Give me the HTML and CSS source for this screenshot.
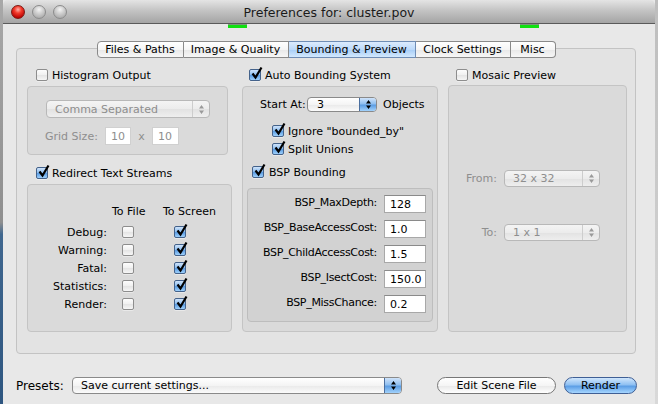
FILE: index.html
```html
<!DOCTYPE html>
<html>
<head>
<meta charset="utf-8">
<title>Preferences for: cluster.pov</title>
<link rel="stylesheet" href="styles.css">
</head>
<body>
<div class="screen">
  <div class="desk-l"></div>
  <div class="window">
    <div class="titlebar">
      <div class="lights"><span class="light red"></span><span class="light grey"></span><span class="light grey"></span></div>
      <div class="title">Preferences for: cluster.pov</div>
    </div>
    <span class="mark m1"></span><span class="mark m2"></span>
    <div class="body">
      <div class="tabbox">
        <div class="tabs">
          <span class="tab t1">Files &amp; Paths</span>
          <span class="tab t2">Image &amp; Quality</span>
          <span class="tab t3 sel">Bounding &amp; Preview</span>
          <span class="tab t4">Clock Settings</span>
          <span class="tab t5">Misc</span>
        </div>
        <div class="cols">
          <div class="col left">
            <div class="chk-row"><span class="cb"></span><span>Histogram Output</span></div>
            <div class="group hist">
              <div class="popup dis wide"><span class="pv">Comma Separated</span><span class="step"><svg width="7" height="11" viewBox="0 0 7 11"><path d="M3.5 1L6 4.5H1Z M1 6.5H6L3.5 10Z" fill="#9a9a9a"/></svg></span></div>
              <div class="grid-row"><span class="glab">Grid Size:</span><span class="field dis w26">10</span><span class="gx">x</span><span class="field dis w27">10</span></div>
            </div>
            <div class="chk-row redirect"><span class="cb on"><svg class="ck" viewBox="0 0 14 14"><path d="M2.5 6.5L5.5 10.5L11.5 0.5" fill="none" stroke="#000" stroke-width="2.2"/></svg></span><span>Redirect Text Streams</span></div>
            <div class="group streams">
              <div class="srow head"><span class="sl"></span><span class="sh1">To File</span><span class="sh2">To Screen</span></div>
              <div class="srow"><span class="sl">Debug:</span><span class="s1"><span class="cb"></span></span><span class="s2"><span class="cb on"><svg class="ck" viewBox="0 0 14 14"><path d="M2.5 6.5L5.5 10.5L11.5 0.5" fill="none" stroke="#000" stroke-width="2.2"/></svg></span></span></div>
              <div class="srow"><span class="sl">Warning:</span><span class="s1"><span class="cb"></span></span><span class="s2"><span class="cb on"><svg class="ck" viewBox="0 0 14 14"><path d="M2.5 6.5L5.5 10.5L11.5 0.5" fill="none" stroke="#000" stroke-width="2.2"/></svg></span></span></div>
              <div class="srow"><span class="sl">Fatal:</span><span class="s1"><span class="cb"></span></span><span class="s2"><span class="cb on"><svg class="ck" viewBox="0 0 14 14"><path d="M2.5 6.5L5.5 10.5L11.5 0.5" fill="none" stroke="#000" stroke-width="2.2"/></svg></span></span></div>
              <div class="srow"><span class="sl">Statistics:</span><span class="s1"><span class="cb"></span></span><span class="s2"><span class="cb on"><svg class="ck" viewBox="0 0 14 14"><path d="M2.5 6.5L5.5 10.5L11.5 0.5" fill="none" stroke="#000" stroke-width="2.2"/></svg></span></span></div>
              <div class="srow"><span class="sl">Render:</span><span class="s1"><span class="cb"></span></span><span class="s2"><span class="cb on"><svg class="ck" viewBox="0 0 14 14"><path d="M2.5 6.5L5.5 10.5L11.5 0.5" fill="none" stroke="#000" stroke-width="2.2"/></svg></span></span></div>
            </div>
          </div>

          <div class="col mid">
            <div class="chk-row"><span class="cb on"><svg class="ck" viewBox="0 0 14 14"><path d="M2.5 6.5L5.5 10.5L11.5 0.5" fill="none" stroke="#000" stroke-width="2.2"/></svg></span><span>Auto Bounding System</span></div>
            <div class="group auto">
              <div class="start-row">
                <span class="slab">Start At:</span>
                <div class="popup blue small"><span class="pv">3</span><span class="step bl"><svg width="7" height="11" viewBox="0 0 7 11"><path d="M3.5 1L6 4.5H1Z M1 6.5H6L3.5 10Z" fill="#000"/></svg></span></div>
                <span class="obj">Objects</span>
              </div>
              <div class="chk-row sub ign"><span class="cb on"><svg class="ck" viewBox="0 0 14 14"><path d="M2.5 6.5L5.5 10.5L11.5 0.5" fill="none" stroke="#000" stroke-width="2.2"/></svg></span><span>Ignore "bounded_by"</span></div>
              <div class="chk-row sub"><span class="cb on"><svg class="ck" viewBox="0 0 14 14"><path d="M2.5 6.5L5.5 10.5L11.5 0.5" fill="none" stroke="#000" stroke-width="2.2"/></svg></span><span>Split Unions</span></div>
              <div class="chk-row bsp"><span class="cb on"><svg class="ck" viewBox="0 0 14 14"><path d="M2.5 6.5L5.5 10.5L11.5 0.5" fill="none" stroke="#000" stroke-width="2.2"/></svg></span><span>BSP Bounding</span></div>
              <div class="group inner">
                <div class="brow"><span class="blab">BSP_MaxDepth:</span><span class="field bf">128</span></div>
                <div class="brow"><span class="blab">BSP_BaseAccessCost:</span><span class="field bf">1.0</span></div>
                <div class="brow"><span class="blab">BSP_ChildAccessCost:</span><span class="field bf">1.5</span></div>
                <div class="brow"><span class="blab">BSP_IsectCost:</span><span class="field bf">150.0</span></div>
                <div class="brow"><span class="blab">BSP_MissChance:</span><span class="field bf">0.2</span></div>
              </div>
            </div>
          </div>

          <div class="col right">
            <div class="chk-row"><span class="cb"></span><span>Mosaic Preview</span></div>
            <div class="group mosaic">
              <div class="mrow from"><span class="mlab">From:</span><div class="popup dis mp"><span class="pv">32 x 32</span><span class="step"><svg width="7" height="11" viewBox="0 0 7 11"><path d="M3.5 1L6 4.5H1Z M1 6.5H6L3.5 10Z" fill="#9a9a9a"/></svg></span></div></div>
              <div class="mrow to"><span class="mlab">To:</span><div class="popup dis mp"><span class="pv">1 x 1</span><span class="step"><svg width="7" height="11" viewBox="0 0 7 11"><path d="M3.5 1L6 4.5H1Z M1 6.5H6L3.5 10Z" fill="#9a9a9a"/></svg></span></div></div>
            </div>
          </div>
        </div>
      </div>

      <div class="footer">
        <span class="plab">Presets:</span>
        <div class="popup blue presets"><span class="pv">Save current settings...</span><span class="step bl"><svg width="7" height="11" viewBox="0 0 7 11"><path d="M3.5 1L6 4.5H1Z M1 6.5H6L3.5 10Z" fill="#000"/></svg></span></div>
        <span class="btn edit">Edit Scene File</span>
        <span class="btn render">Render</span>
      </div>
    </div>
  </div>
  <div class="desk-r"></div>
</div>
</body>
</html>
```

FILE: styles.css
```css
* { box-sizing: border-box; }
html, body { margin: 0; padding: 0; }
body {
  width: 658px; height: 404px; overflow: hidden;
  font-family: "DejaVu Sans", sans-serif; font-size: 11px; color: #000;
  background: #888;
}
.screen { display: flex; height: 404px; }
.desk-l { width: 3px; background: linear-gradient(#a8a8a8, #8f8f8f 55%, #40678f 58%, #2e5680); }
.desk-r { width: 3px; background: linear-gradient(#bdbdbd, #d9d9d9); }
.window { position: relative; width: 652px; background: #e8e8e8; display: flex; flex-direction: column; }

.titlebar {
  height: 24px; border-bottom: 1px solid #5a5a5a;
  background: linear-gradient(#e4e4e4, #c4c4c4 45%, #a4a4a4);
  display: flex; align-items: center; position: relative;
  border-radius: 5px 5px 0 0;
}
.lights { display: flex; gap: 7px; padding-left: 8px; position: relative; z-index: 1; }
.light { width: 14px; height: 14px; border-radius: 50%; display: block; }
.light.red { background: radial-gradient(circle at 50% 30%, #ffb0a8 0, #f23b2c 35%, #b80000 80%); border: 1px solid #7d1a14; }
.light.grey { background: radial-gradient(circle at 50% 30%, #f4f4f4 0, #cfcfcf 40%, #a9a9a9 85%); border: 1px solid #8c8c8c; }
.title { position: absolute; left: 0; right: 0; top: 0; bottom: 0; display: flex; align-items: center; justify-content: center; font-size: 12.5px; color: #1a1a1a; padding-top: 1px; }

.mark { position: absolute; top: 24px; width: 19px; height: 4px; background: #10e010; border-top: 1px solid #7a9a7a; }
.m1 { left: 225px; }
.m2 { left: 517px; }

.body { display: flex; flex-direction: column; padding-left: 13px; }
.tabbox {
  margin-top: 24px; width: 620px; height: 306px;
  border: 1px solid #c3c3c3; border-radius: 4px; background: #e3e3e3;
  display: flex; flex-direction: column;
}
.tabs { display: flex; justify-content: center; margin-top: -8px; height: 17px; }
.tab {
  height: 17px; display: flex; align-items: center; justify-content: center;
  border: 1px solid #8a8a8a; border-left: none;
  background: linear-gradient(#ffffff, #f5f5f5 50%, #e8e8e8 51%, #f7f7f7);
  font-size: 11px; white-space: nowrap;
}
.t1 { width: 87px; border-left: 1px solid #8a8a8a; border-radius: 4px 0 0 4px; }
.t2 { width: 105px; }
.t3 { width: 127px; }
.t4 { width: 95px; }
.t5 { width: 45px; border-radius: 0 4px 4px 0; }
.tab.sel { background: linear-gradient(#dcebfd, #bcd9fa 50%, #a6cdf7 51%, #d3e9fe); border-color: #6f8db5; }

.cols { display: flex; gap: 10px; margin-top: 8px; padding-left: 10px; }
.col { display: flex; flex-direction: column; }
.left { width: 205px; }
.mid { width: 196px; }
.right { width: 179px; }

.chk-row { height: 18px; display: flex; align-items: center; gap: 4px; white-space: nowrap; }
.left > .chk-row { padding-left: 9px; }
.mid > .chk-row { padding-left: 7px; }
.right > .chk-row { padding-left: 8px; }
.redirect { margin-top: 9px; }

.cb {
  position: relative; display: inline-block; width: 12px; height: 12px; flex: none;
  border: 1px solid #8d8d8d; border-radius: 2px;
  background: linear-gradient(#fdfdfd, #f0f0f0 50%, #e4e4e4 51%, #f6f6f6);
  box-shadow: 0 1px 0 rgba(255,255,255,0.4);
}
.cb.on { border-color: #44628a; background: linear-gradient(#cfe3fa, #8fbff0 45%, #5c9de3 55%, #9ed0fb); }
.ck { position: absolute; left: 0; top: -3px; width: 14px; height: 14px; overflow: visible; }

.group { border: 1px solid #c4c4c4; border-radius: 4px; background: #dadada; margin-top: 2px; }
.hist { width: 201px; height: 69px; display: flex; flex-direction: column; }
.streams { width: 205px; height: 148px; padding-top: 17px; }
.auto { width: 196px; height: 246px; display: flex; flex-direction: column; }
.mosaic { width: 179px; height: 247px; margin-top: 1px; display: flex; flex-direction: column; }

.popup {
  display: flex; align-items: center; border: 1px solid #8a8a8a; border-radius: 4px;
  background: linear-gradient(#ffffff, #f4f4f4 50%, #e9e9e9 51%, #fbfbfb);
  overflow: hidden; white-space: nowrap;
}
.popup .pv { flex: 1; padding-left: 8px; }
.popup .step { width: 17px; align-self: stretch; display: flex; align-items: center; justify-content: center; border-left: 1px solid #c0c0c0; }
.popup .step.bl { border-left: 1px solid #4b6f9f; background: linear-gradient(#cfe3fa, #8fbff0 45%, #5c9de3 55%, #a2d2fc); }
.popup.dis { border-color: #b8b8b8; color: #8e8e8e; background: linear-gradient(#f4f4f4, #ececec 50%, #e2e2e2 51%, #eeeeee); }
.popup.dis .step { border-left-color: #cdcdcd; }
.wide { width: 164px; height: 18px; margin: 13px 0 0 18px; }
.small { width: 70px; height: 15px; }
.small .pv { padding-left: 9px; }
.mp { width: 96px; height: 17px; }

.grid-row { display: flex; align-items: center; height: 18px; margin-top: 9px; padding-left: 17px; color: #8e8e8e; }
.glab { width: 60px; }
.gx { width: 21px; text-align: center; }
.field { display: flex; align-items: center; height: 18px; background: #fff; border: 1px solid #a8a8a8; border-top-color: #8a8a8a; padding-left: 5px; }
.field.dis { border-color: #d0d0d0; color: #8e8e8e; }
.w26 { width: 26px; }
.w27 { width: 27px; }

.srow { display: flex; align-items: center; height: 18px; }
.srow.head { margin-bottom: 3px; }
.sl { width: 79px; text-align: right; }
.s1 { width: 45px; padding-left: 15px; display: flex; }
.s2 { padding-left: 22px; display: flex; }
.sh1 { width: 45px; padding-left: 5px; }
.sh2 { padding-left: 11px; }

.start-row { display: flex; align-items: center; height: 15px; margin-top: 10px; padding-left: 17px; }
.slab { width: 47px; }
.obj { margin-left: 6px; }
.chk-row.sub { padding-left: 29px; }
.chk-row.ign { margin-top: 10px; }
.chk-row.bsp { padding-left: 9px; margin-top: 5px; gap: 5px; }
.inner { width: 186px; height: 134px; margin: 7px 0 0 4px; background: #d2d2d2; border-color: #bdbdbd; padding-top: 6px; display: flex; flex-direction: column; gap: 7px; }
.brow { display: flex; align-items: center; height: 18px; }
.blab { width: 129px; text-align: right; padding-bottom: 3px; letter-spacing: -0.3px; }
.bf { width: 42px; margin-left: 7px; }

.mrow { display: flex; align-items: center; height: 17px; color: #8e8e8e; }
.mrow.from { margin-top: 84px; }
.mrow.to { margin-top: 37px; }
.mlab { width: 55px; text-align: right; padding-right: 7px; }

.footer { display: flex; align-items: center; height: 17px; margin-top: 23px; }
.plab { width: 56px; font-size: 12px; }
.presets { width: 330px; height: 17px; }
.btn {
  height: 17px; display: flex; align-items: center; justify-content: center;
  border: 1px solid #777; border-radius: 9px; white-space: nowrap;
}
.edit { width: 119px; margin-left: 35px; background: linear-gradient(#ffffff, #f5f5f5 50%, #e8e8e8 51%, #ffffff); }
.render { width: 73px; margin-left: 8px; border-color: #3f5f95; background: linear-gradient(#d0e6fc, #8fc0f2 45%, #5c9ee6 55%, #a6d6ff); }
```
